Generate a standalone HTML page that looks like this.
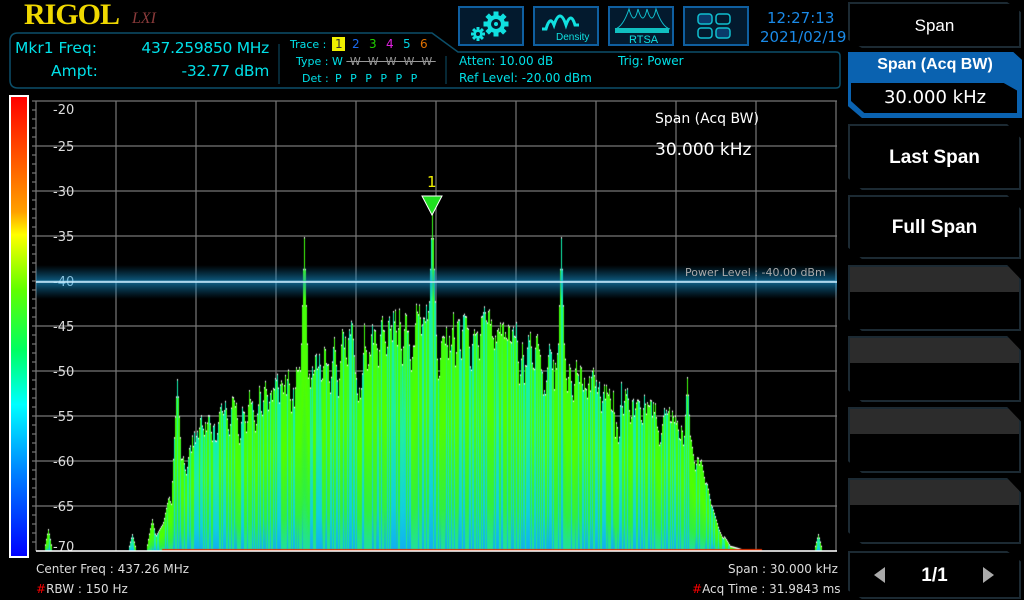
<!DOCTYPE html>
<html><head><meta charset="utf-8"><style>
*{margin:0;padding:0;box-sizing:border-box}
body{width:1024px;height:600px;background:#000;position:relative;overflow:hidden;font-family:"DejaVu Sans","Liberation Sans",sans-serif;color:#00e0e8}
.a{position:absolute;white-space:nowrap}
.btn{position:absolute;left:458px;top:6px;width:66px;height:40px;background:#031a2e;border:2px solid #0f5fa0}
.rb{position:absolute;left:848px;width:173px;background:#000;border:2px solid #1c2a33;clip-path:polygon(0 0,92% 0,100% 22%,100% 100%,8% 100%,0 82%);color:#fff;font-family:"Liberation Sans",sans-serif;font-weight:bold;font-size:19px;text-align:center}
.blank{background:linear-gradient(#2c2c2c 0,#2c2c2c 40%,#000 40%)}
</style></head><body>
<div class="a" style="left:24px;top:-2px;font-family:'Liberation Serif',serif;font-weight:bold;font-size:30px;color:#f0d800;letter-spacing:-1px">RIGOL</div>
<div class="a" style="left:132px;top:10px;font-family:'Liberation Serif',serif;font-style:italic;font-size:16px;color:#8a3a3a">LXI</div>
<svg class="a" style="left:0;top:0" width="1024" height="100">
<path d="M18 33 H432 L458 52 H836 Q840 52 840 56 V84 Q840 88 836 88 H18 Q10 88 10 80 V41 Q10 33 18 33Z" fill="none" stroke="#0c4f6a" stroke-width="1.5"/>
<line x1="279" y1="44" x2="279" y2="84" stroke="#0c4f6a"/><line x1="446" y1="56" x2="446" y2="84" stroke="#0c4f6a"/>
</svg>
<div class="a" style="left:15px;top:39px;font-size:15.5px">Mkr1 Freq:</div>
<div class="a" style="left:51px;top:62px;font-size:15.5px">Ampt:</div>
<div class="a" style="right:755px;top:39px;font-size:15.5px;letter-spacing:-0.3px">437.259850 MHz</div>
<div class="a" style="right:755px;top:62px;font-size:15.5px;letter-spacing:-0.3px">-32.77 dBm</div>
<div class="a" style="left:290px;top:38px;font-size:11px">Trace :</div>
<div class="a" style="left:296px;top:55px;font-size:11px">Type :</div>
<div class="a" style="left:302px;top:72px;font-size:11px">Det :</div>
<div class="a" style="left:332px;top:37px;width:13px;height:14px;background:#f0f000"></div>
<div class="a" style="left:335px;top:37px;font-size:12px;color:#333">1</div>
<div class="a" style="left:352px;top:37px;font-size:12px;color:#1a6af0">2</div>
<div class="a" style="left:369px;top:37px;font-size:12px;color:#20d000">3</div>
<div class="a" style="left:386px;top:37px;font-size:12px;color:#e020e0">4</div>
<div class="a" style="left:403px;top:37px;font-size:12px;color:#00d0e0">5</div>
<div class="a" style="left:420px;top:37px;font-size:12px;color:#e07000">6</div>
<div class="a" style="left:332px;top:55px;font-size:11px">W <span style="color:#999;text-decoration:line-through">&nbsp;W&nbsp; W&nbsp; W&nbsp; W&nbsp; W&nbsp;</span></div>
<div class="a" style="left:335px;top:72px;font-size:11px;word-spacing:5px">P P P P P P</div>
<div class="a" style="left:459px;top:54px;font-size:12px">Atten: 10.00 dB</div>
<div class="a" style="left:459px;top:71px;font-size:12px">Ref Level: -20.00 dBm</div>
<div class="a" style="left:618px;top:54px;font-size:12px">Trig: Power</div>
<div class="btn"></div><div class="btn" style="left:533px"></div><div class="btn" style="left:608px"></div><div class="btn" style="left:683px"></div>
<svg class="a" style="left:458px;top:6px" width="300" height="40">
<g fill="#10e0e0">
<circle cx="38" cy="18" r="9"/>
<g transform="translate(38 18)"><rect x="-2.5" y="-12.5" width="5" height="25"/><rect x="-2.5" y="-12.5" width="5" height="25" transform="rotate(45)"/><rect x="-2.5" y="-12.5" width="5" height="25" transform="rotate(90)"/><rect x="-2.5" y="-12.5" width="5" height="25" transform="rotate(135)"/></g>
<circle cx="20" cy="28" r="4.5"/>
<g transform="translate(20 28)"><rect x="-1.5" y="-7" width="3" height="14"/><rect x="-1.5" y="-7" width="3" height="14" transform="rotate(45)"/><rect x="-1.5" y="-7" width="3" height="14" transform="rotate(90)"/><rect x="-1.5" y="-7" width="3" height="14" transform="rotate(135)"/></g>
</g>
<circle cx="38" cy="18" r="5" fill="#031a2e"/><circle cx="38" cy="18" r="2" fill="#10e0e0"/>
<circle cx="20" cy="28" r="2" fill="#031a2e"/>
<path d="M84 23 h4 q4-14 8-4 q6-18 12 0 q5-14 9 0 h4" stroke="#10e0e0" stroke-width="3" fill="none"/>
<text x="98" y="34" font-size="10" fill="#10e0e0" font-family="Liberation Sans">Density</text>
<path d="M157 23 q8-2 14-20 q5 18 9 0 q5 18 9 0 q5 18 9 0 q6 18 14 20" stroke="#10c0d0" stroke-width="1" fill="none"/>
<rect x="157" y="22" width="54" height="5" fill="#10c0c0"/>
<text x="171" y="37" font-size="11" fill="#10e0e0" font-family="Liberation Sans">RTSA</text>
<g stroke="#10c0d0" stroke-width="1.5"><rect x="240" y="8" width="14" height="10" rx="3" fill="#0a3a6a"/><rect x="258" y="8" width="14" height="10" rx="3" fill="none"/><rect x="240" y="22" width="14" height="10" rx="3" fill="none"/><rect x="258" y="22" width="14" height="10" rx="3" fill="#0a3a6a"/></g>
</svg>
<div class="a" style="left:767px;top:9px;font-size:15px;color:#1a8ae8">12:27:13</div>
<div class="a" style="left:760px;top:28px;font-size:15px;color:#1a8ae8">2021/02/19</div>

<div class="rb" style="top:2px;height:46px;line-height:44px;font-weight:normal;font-size:17px">Span</div>
<div class="a" style="left:848px;top:52px;width:174px;height:66px;background:#0a62b0;clip-path:polygon(0 0,95% 0,100% 12%,100% 100%,8% 100%,0 82%)"></div>
<div class="a" style="left:848px;top:56px;width:174px;text-align:center;font-size:16px;color:#fff;font-weight:bold;font-family:'Liberation Sans',sans-serif">Span (Acq BW)</div>
<div class="a" style="left:851px;top:83px;width:166px;height:30px;background:#000;clip-path:polygon(0 0,92% 0,100% 25%,100% 100%,8% 100%,0 60%)"></div>
<div class="a" style="left:848px;top:87px;width:174px;text-align:center;font-size:18px;color:#fff">30.000 kHz</div>
<div class="rb" style="top:124px;height:66px;line-height:64px">Last Span</div>
<div class="rb" style="top:195px;height:64px;line-height:62px">Full Span</div>
<div class="rb blank" style="top:265px;height:66px"></div>
<div class="rb blank" style="top:336px;height:66px"></div>
<div class="rb blank" style="top:407px;height:66px"></div>
<div class="rb blank" style="top:478px;height:66px"></div>
<div class="rb" style="top:551px;height:48px;line-height:46px">1/1</div>
<div class="a" style="left:874px;top:567px;width:0;height:0;border-right:11px solid #aaa;border-top:8px solid transparent;border-bottom:8px solid transparent"></div>
<div class="a" style="left:983px;top:567px;width:0;height:0;border-left:11px solid #aaa;border-top:8px solid transparent;border-bottom:8px solid transparent"></div>

<div class="a" style="left:9px;top:95px;width:20px;height:463px;border:2px solid #fff;background:linear-gradient(#ff0000 0%,#ff6000 15%,#ffa000 25%,#ffff00 30%,#60ff00 42%,#00ff60 55%,#00ffff 67%,#0080ff 82%,#0000ff 100%)"></div>
<svg class="a" style="left:0;top:0" width="840" height="560">
<g stroke="#777" stroke-width="1.2" id="grid"></g>
<g id="lbl" fill="#ddd" font-size="13" font-family="DejaVu Sans"></g>
</svg>
<canvas id="cv" class="a" style="left:36px;top:101px" width="801" height="450"></canvas>
<svg class="a" style="left:0;top:0" width="840" height="560">
<defs><linearGradient id="gl" x1="0" y1="0" x2="0" y2="1"><stop offset="0" stop-color="#0a80c0" stop-opacity="0"/><stop offset=".5" stop-color="#1aa0e0" stop-opacity=".6"/><stop offset="1" stop-color="#0a80c0" stop-opacity="0"/></linearGradient></defs>
<rect x="36" y="265" width="801" height="34" fill="url(#gl)"/>
<line x1="36" y1="282" x2="837" y2="282" stroke="#cfefff" stroke-width="1.5"/>
<text x="685" y="276" font-size="11" fill="#aaa" font-family="DejaVu Sans">Power Level : -40.00 dBm</text>
<polygon points="422,196 442,196 432,215" fill="#20e020" stroke="#fff" stroke-width="1"/>
<text x="427" y="187" font-size="15" fill="#f0f000" font-family="DejaVu Sans">1</text>
<line x1="36" y1="551" x2="837" y2="551" stroke="#fff" stroke-width="1.5"/>
</svg>
<div class="a" style="left:655px;top:111px;font-size:14px;color:#fff">Span (Acq BW)</div>
<div class="a" style="left:655px;top:140px;font-size:17px;color:#fff">30.000 kHz</div>
<div class="a" style="left:36px;top:562px;font-size:12px;color:#ddd">Center Freq : 437.26 MHz</div>
<div class="a" style="left:36px;top:582px;font-size:12px;color:#ddd"><span style="color:#f00">#</span>RBW : 150 Hz</div>
<div class="a" style="left:728px;top:562px;font-size:12px;color:#ddd">Span : 30.000 kHz</div>
<div class="a" style="left:692px;top:582px;font-size:12px;color:#ddd"><span style="color:#f00">#</span>Acq Time : 31.9843 ms</div>
<script>
(function(){
var ns="http://www.w3.org/2000/svg",g=document.getElementById('grid'),lb=document.getElementById('lbl');
function el(t,a,p){var e=document.createElementNS(ns,t);for(var k in a)e.setAttribute(k,a[k]);p.appendChild(e);return e;}
for(var i=0;i<=10;i++){var x=36+80*i;el('line',{x1:x,y1:101,x2:x,y2:551},g);var y=101+45*i;el('line',{x1:36,y1:y,x2:837,y2:y},g);
var t=el('text',{x:53,y:i==0?y+13:(i==10?y-0:y+5)},lb);t.textContent=(-20-5*i);}
for(var y2=101;y2<551;y2+=9)el('line',{x1:32,y1:y2,x2:36,y2:y2},g);
var c=document.getElementById('cv').getContext('2d');
var sd=11;function r(){sd=(sd*16807)%2147483647;return sd/2147483647;}
var env=[[126,551],[160,551],[163,520],[175,470],[200,415],[240,390],[300,362],[350,318],[390,305],[440,300],[480,305],[520,322],[560,350],[620,380],[670,405],[700,450],[712,500],[725,540],[735,551],[800,551]];
function E(x){for(var i=0;i<env.length-1;i++){if(x>=env[i][0]&&x<=env[i+1][0]){var f=(x-env[i][0])/(env[i+1][0]-env[i][0]);return env[i][1]+f*(env[i+1][1]-env[i][1]);}}return 551;}
var tops=[];for(var q=0;q<801;q++)tops.push(551);
function hump(cx,tp,w){for(var x=Math.floor(cx-w);x<=cx+w;x++){if(x<0||x>=801)continue;var d=Math.abs(x-cx)/w;var yy=tp+(551-tp)*Math.pow(d,1.1);if(yy<tops[x])tops[x]=yy;}}
for(var k=0;k<600;k++){var cx=120+r()*620;var e=E(cx+36);if(e>=550)continue;var tp=e+Math.pow(r(),1.6)*80;hump(cx,tp,5+r()*10);}
[[177,380,4],[304,238,4],[432,212,5],[561,238,4],[687,378,4],[48,530,2],[132,535,2],[152,520,3],[818,535,2]].forEach(function(sp){hump(sp[0]-36,sp[1],sp[2]*2);});
for(var i2=0;i2<801;i2++){var v=tops[i2]-101;if(v>=449)continue;
var gr=c.createLinearGradient(0,v,0,450);var bl=r();
gr.addColorStop(0,bl<0.3?'#10f0b0':'#40ff10');gr.addColorStop(0.4,bl<0.4?'#20f0a0':'#50ff00');gr.addColorStop(0.8,bl<0.4?'#10d0e0':'#30f040');gr.addColorStop(1,bl<0.5?'#10b0f0':'#20e0a0');
c.fillStyle=gr;c.fillRect(i2,v,1,450-v);
c.fillStyle='#fff';c.fillRect(i2,v-1,1,1.5);}
c.fillStyle='#e03000';c.fillRect(126,448,600,2);
})();
</script>
</body></html>
